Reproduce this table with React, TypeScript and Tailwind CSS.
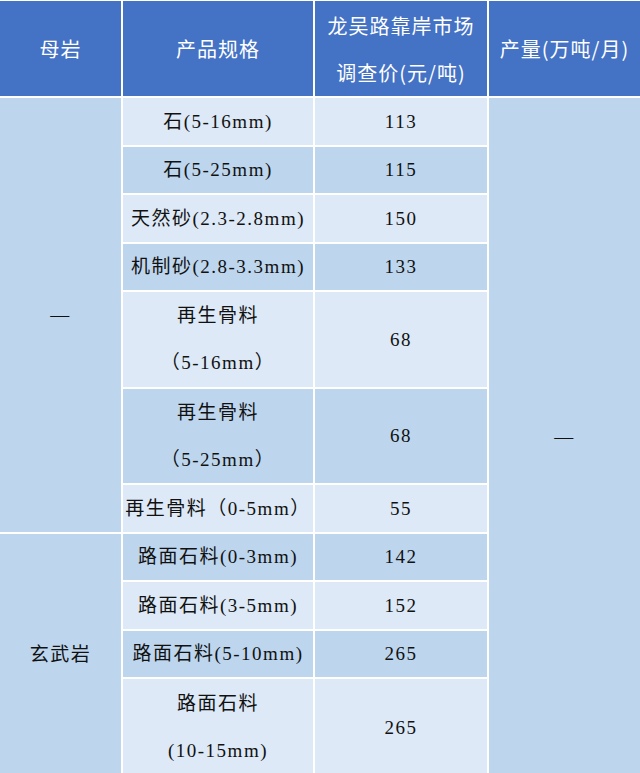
const light = "bg-[#dde9f6]";
const dark = "bg-[#bdd6ee]";

type Row = { spec: string[]; price: string; row: string };

const rows: Row[] = [
  { spec: ["石(5-16mm)"], price: "113", row: "row-start-2" },
  { spec: ["石(5-25mm)"], price: "115", row: "row-start-3" },
  { spec: ["天然砂(2.3-2.8mm)"], price: "150", row: "row-start-4" },
  { spec: ["机制砂(2.8-3.3mm)"], price: "133", row: "row-start-5" },
  { spec: ["再生骨料", "（5-16mm）"], price: "68", row: "row-start-6" },
  { spec: ["再生骨料", "（5-25mm）"], price: "68", row: "row-start-7" },
  { spec: ["再生骨料（0-5mm）"], price: "55", row: "row-start-8" },
  { spec: ["路面石料(0-3mm)"], price: "142", row: "row-start-9" },
  { spec: ["路面石料(3-5mm)"], price: "152", row: "row-start-10" },
  { spec: ["路面石料(5-10mm)"], price: "265", row: "row-start-11" },
  { spec: ["路面石料", "(10-15mm)"], price: "265", row: "row-start-12" },
];

const body = "flex flex-col items-center justify-center text-[19px] text-[#111] tracking-[1.5px] leading-[47px]";
const head =
  "flex flex-col items-center justify-center bg-[#4472c4] text-white text-[20px] tracking-[1px] leading-[47px] font-['Noto_Sans_CJK_SC','Noto_Sans',sans-serif]";

export default function App() {
  return (
    <div className="w-[640px] h-[773px] overflow-hidden bg-white pt-[1px] font-['Liberation_Serif','Noto_Sans_CJK_SC',serif]">
      <div className="grid grid-cols-[121px_190px_172px_1fr] grid-rows-[95px_46.5px_46.5px_46.5px_46.5px_94.5px_94.5px_46.5px_46.5px_46.5px_46.5px_96px] gap-[2px]">
        {/* header */}
        <div className={head}>母岩</div>
        <div className={head}>产品规格</div>
        <div className={head}>
          <span>龙吴路靠岸市场</span>
          <span>调查价(元/吨)</span>
        </div>
        <div className={head}>产量(万吨/月)</div>

        {/* merged cells */}
        <div className={`${body} ${dark} col-start-1 row-start-2 row-span-7`}>—</div>
        <div className={`${body} ${dark} col-start-1 row-start-9 row-span-4`}>玄武岩</div>
        <div className={`${body} ${dark} col-start-4 row-start-2 row-span-11`}>—</div>

        {rows.map((r, i) => {
          const bg = i % 2 === 0 ? light : dark;
          return [
            <div key={`s${i}`} className={`${body} ${bg} ${r.row} col-start-2`}>
              {r.spec.map((line, j) => (
                <span key={j}>{line}</span>
              ))}
            </div>,
            <div key={`p${i}`} className={`${body} ${bg} ${r.row} col-start-3`}>
              {r.price}
            </div>,
          ];
        })}
      </div>
    </div>
  );
}
